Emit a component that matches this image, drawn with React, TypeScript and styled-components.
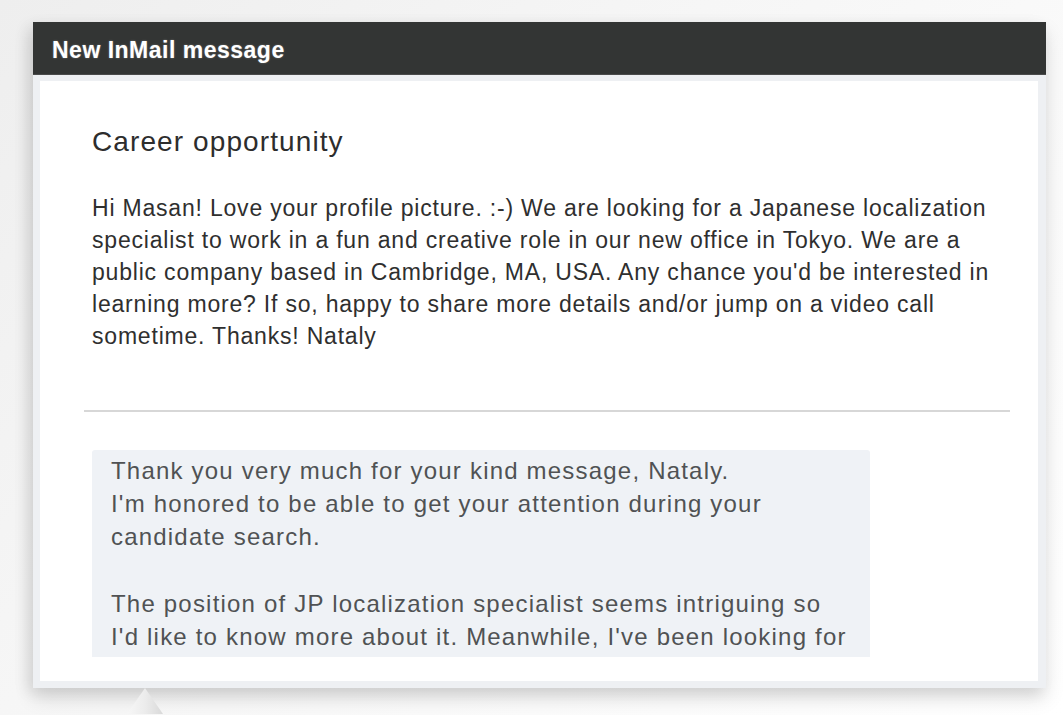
import styled, { createGlobalStyle } from "styled-components";

const GlobalStyle = createGlobalStyle`
  html, body {
    margin: 0;
    padding: 0;
  }
  body {
    width: 1063px;
    height: 715px;
    overflow: hidden;
    background: linear-gradient(135deg, #eeeeee 0%, #f6f6f6 40%, #fbfbfb 70%, #ffffff 100%);
    font-family: "Liberation Sans", Arial, Helvetica, sans-serif;
  }
`;

function App() {
  return (
    <>
      <GlobalStyle />
      <Page>
        <Window>
          <Header>New InMail message</Header>
          <Frame>
            <Panel>
              <Message>
                <Subject>Career opportunity</Subject>
                <Body>
                  Hi Masan! Love your profile picture. :-) We are looking for a Japanese localization
                  <br />
                  specialist to work in a fun and creative role in our new office in Tokyo. We are a
                  <br />
                  public company based in Cambridge, MA, USA. Any chance you'd be interested in
                  <br />
                  learning more? If so, happy to share more details and/or jump on a video call
                  <br />
                  sometime. Thanks! Nataly
                </Body>
              </Message>

              <Divider />

              <Reply>
                <ReplyText>
                  Thank you very much for your kind message, Nataly.
                  <br />
                  I'm honored to be able to get your attention during your
                  <br />
                  candidate search.
                </ReplyText>
                <ReplyText>
                  The position of JP localization specialist seems intriguing so
                  <br />
                  I'd like to know more about it. Meanwhile, I've been looking for
                </ReplyText>
              </Reply>
            </Panel>
          </Frame>
          <Tail viewBox="0 0 40 26" width="40" height="26">
            <defs>
              <linearGradient id="tailFill" x1="0" y1="0" x2="1" y2="0">
                <stop offset="0" stopColor="#f7f7f7" />
                <stop offset="0.5" stopColor="#ececec" />
                <stop offset="1" stopColor="#d9d9d9" />
              </linearGradient>
            </defs>
            <polygon points="20,0 38,26 2,26" fill="url(#tailFill)" />
          </Tail>
        </Window>
      </Page>
    </>
  );
}

export default App;

const Page = styled.div`
  padding: 22px 0 0 33px;
`;

const Window = styled.div`
  position: relative;
  width: 1013px;
  box-shadow: 0 10px 18px rgba(0, 0, 0, 0.13), -6px 4px 14px rgba(0, 0, 0, 0.08);
`;

const Header = styled.div`
  height: 53px;
  box-sizing: border-box;
  padding: 5px 0 0 19px;
  display: flex;
  align-items: center;
  background: #333534;
  border-bottom: 1px solid #4a4b4b;
  color: #ffffff;
  font-size: 23px;
  font-weight: 700;
  letter-spacing: 0.5px;
  text-shadow: 0 0 2px rgba(255, 255, 255, 0.35);
`;

const Frame = styled.div`
  padding: 6px 8px 7px 7px;
  background: #eef0f3;
`;

const Panel = styled.div`
  height: 600px;
  box-sizing: border-box;
  padding: 45px 28px 0 44px;
  background: #ffffff;
`;

const Message = styled.div`
  padding-left: 8px;
`;

const Subject = styled.h2`
  margin: 0;
  font-size: 28px;
  line-height: 32px;
  font-weight: 400;
  color: #2d2d2d;
  letter-spacing: 1.1px;
`;

const Body = styled.p`
  margin: 34px 0 0;
  font-size: 23px;
  line-height: 32px;
  color: #2f2f2f;
  letter-spacing: 0.8px;
  white-space: nowrap;
`;

const Divider = styled.hr`
  margin: 58px 0 0;
  border: none;
  height: 2px;
  background: #d7d7d7;
`;

const Reply = styled.div`
  margin: 38px 0 0 8px;
  width: 778px;
  height: 207px;
  box-sizing: border-box;
  padding: 4px 0 0 19px;
  overflow: hidden;
  background: #eff2f6;
  border-radius: 3px 3px 0 0;
  display: flex;
  flex-direction: column;
  gap: 34px;
`;

const ReplyText = styled.p`
  margin: 0;
  font-size: 24px;
  line-height: 33px;
  color: #505254;
  letter-spacing: 1.2px;
  white-space: nowrap;
`;

const Tail = styled.svg`
  position: absolute;
  left: 92px;
  top: 100%;
  display: block;
`;
